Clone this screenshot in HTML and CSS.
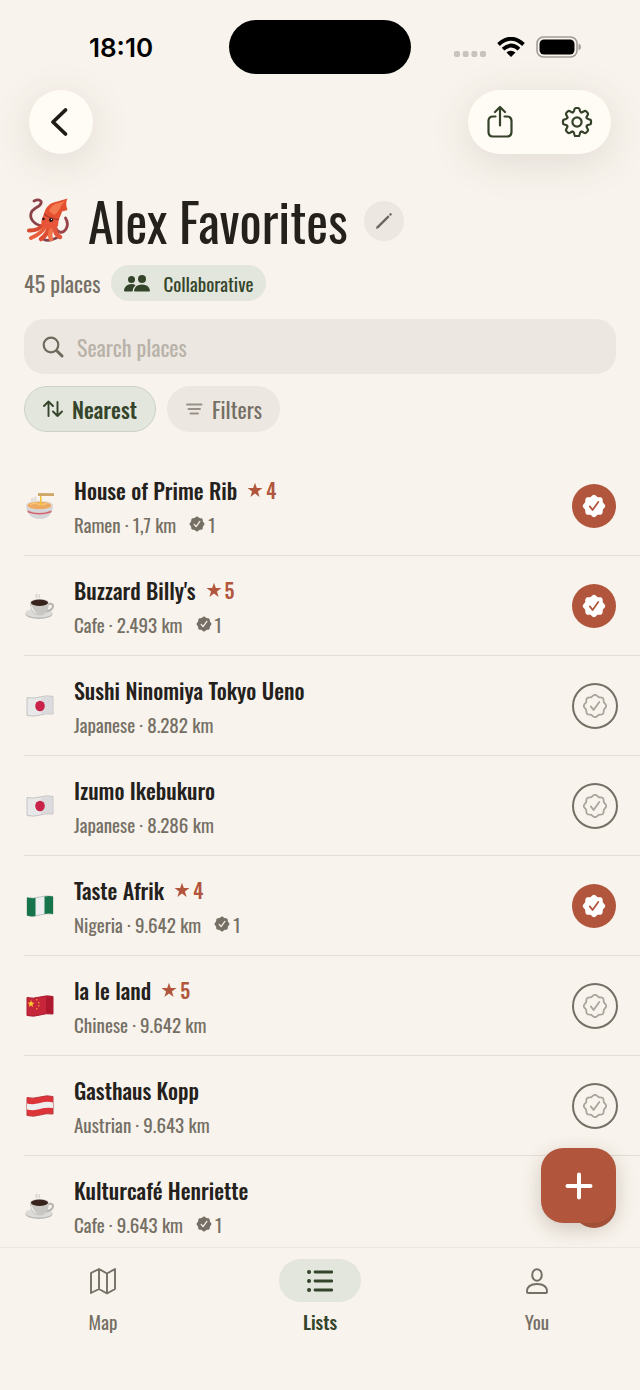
FILE: index.html
```html
<!DOCTYPE html>
<html lang="en">
<head>
    <meta charset="UTF-8">
    <meta name="viewport" content="width=device-width, initial-scale=1.0">
    <title>Alex Favorites</title>
    <link rel="stylesheet" href="styles.css">
</head>
<body>
    <!-- Shared icons -->
    <svg class="sprite" aria-hidden="true">
        <symbol id="seal" viewBox="8 8 240 240">
            <path d="M225.86,102.82c-3.77-3.94-7.67-8-9.14-11.57-1.36-3.27-1.44-8.69-1.52-13.94-.15-9.76-.31-20.82-8-28.51s-18.75-7.85-28.51-8c-5.25-.08-10.67-.16-13.94-1.52-3.56-1.47-7.63-5.37-11.57-9.14C146.28,23.51,138.44,16,128,16s-18.27,7.51-25.18,14.14c-3.94,3.77-8,7.67-11.57,9.14C88,40.64,82.56,40.72,77.31,40.8c-9.76.15-20.82.31-28.51,8S41,67.55,40.8,77.31c-.08,5.25-.16,10.67-1.52,13.94-1.47,3.56-5.37,7.63-9.14,11.57C23.51,109.72,16,117.56,16,128s7.51,18.27,14.14,25.18c3.77,3.94,7.67,8,9.14,11.57,1.36,3.27,1.44,8.69,1.52,13.94.15,9.76.31,20.82,8,28.51s18.75,7.85,28.51,8c5.25.08,10.67.16,13.94,1.52,3.56,1.47,7.63,5.37,11.57,9.14C109.72,232.49,117.56,240,128,240s18.27-7.51,25.18-14.14c3.94-3.77,8-7.67,11.57-9.14,3.27-1.36,8.69-1.44,13.94-1.52,9.76-.15,20.82-.31,28.51-8s7.85-18.75,8-28.51c.08-5.25.16-10.67,1.52-13.94,1.47-3.56,5.37-7.63,9.14-11.57C232.49,146.28,240,138.44,240,128S232.49,109.73,225.86,102.82Z"/>
            <path class="tick" d="M86 132 L114 168 L171 88"/>
        </symbol>
        <symbol id="star" viewBox="0 0 24 24">
            <path d="M12 1 L14.7 9 H23.2 L16.4 14.1 L18.9 22.4 L12 17.4 L5.1 22.4 L7.6 14.1 L.8 9 H9.3 Z"/>
        </symbol>
        <symbol id="coffee" viewBox="0 0 30 28">
            <ellipse cx="14" cy="22" rx="13.5" ry="5" fill="#b9b7b3"/>
            <ellipse cx="14" cy="21" rx="13.5" ry="4.5" fill="#dddbd7"/>
            <path d="M22 12.500q6-2 6 1.500q0 4-7 5.500" fill="none" stroke="#b5b2ae" stroke-width="2"/>
            <path d="M5 10.500c0 7 3 13 9.500 13s9.500-6 9.500-13z" fill="#c9c7c3"/>
            <path d="M7 14q2 7 7 8-7-1-8-8z" fill="#f6f5f3"/>
            <ellipse cx="14.500" cy="10.500" rx="9.500" ry="3.800" fill="#e0ddd8"/>
            <ellipse cx="14.500" cy="10.800" rx="8.600" ry="3.200" fill="#38241c"/>
            <path d="M12.500 6q-3-2 0-4M15 5.500q-2-1.500 0-3" fill="none" stroke="#d5d3cf" stroke-width="1.500"/>
        </symbol>
        <symbol id="ramen" viewBox="0 0 30 28">
            <path d="M8 10q-2-2 0-4M11 9q-2-2 0-4" fill="none" stroke="#e0dcd6" stroke-width="2"/>
            <path d="M1 12c0 9 5 15 14 15s13-6 13-15z" fill="#d4d5d8"/>
            <ellipse cx="14.500" cy="13" rx="13.500" ry="4.500" fill="#e2e0de"/>
            <ellipse cx="14.500" cy="13.500" rx="12" ry="3.800" fill="#eda862"/>
            <path d="M5 13q4-3 8-1 4 2 9-1" fill="none" stroke="#f8c66f" stroke-width="1.500"/>
            <path d="M2.300 18.500q12.300 5 24.400 0l-.6 2q-11.500 4-23.100 0z" fill="#d4606a"/>
            <path d="M13 2h3.500v11h-1.500V4h-2z" fill="#f2c332"/>
            <path d="M13 1l16 .3v2.700H13z" fill="#cda769"/>
        </symbol>
        <symbol id="flag-jp" viewBox="0 0 28 22">
            <path d="M1 2.500Q7 4 14 2T27 1.500V19Q20 18 14 20T1 20.500z" fill="#e9e8e9" stroke="#c5c3c4"/>
            <path d="M15 3Q21 1 26 2V18Q21 17.500 15 19z" fill="#dbdadc"/>
            <ellipse cx="14" cy="11" rx="4.800" ry="5.200" fill="#c92349"/>
        </symbol>
        <symbol id="flag-ng" viewBox="0 0 28 22">
            <path d="M1 2.500Q7 4 14 2T27 1.500V19Q20 18 14 20T1 20.500z" fill="#eeeeee" stroke="#b7c5bb"/>
            <path d="M1 2.500q5 1 8.500.5v18q-4 1-8.500-.5zM18.500 1.500q5-1 8.500 0V19q-4-1-8.500 0z" fill="#16734a"/>
        </symbol>
        <symbol id="flag-cn" viewBox="0 0 28 22">
            <path d="M1 2.500Q7 4 14 2T27 1.500V19Q20 18 14 20T1 20.500z" fill="#c6253a" stroke="#a81d31"/>
            <path d="M20 2q4-1 7-.5V19q-4-1-7-.5z" fill="#ae1930"/>
            <path d="M5 5l1 2.500 2.500.2-2 1.800.6 2.500L5 10.600l-2.100 1.400.6-2.500-2-1.800 2.500-.2z" fill="#f6c72f"/>
            <path d="M10 4h1.500v1.500H10zM12 7h1.500v1.500H12zM12 10h1.500v1.500H12zM10 13h1.500v1.500H10z" fill="#e38b32"/>
        </symbol>
        <symbol id="flag-at" viewBox="0 0 28 22">
            <path d="M1 2.500Q7 4 14 2T27 1.500V19Q20 18 14 20T1 20.500z" fill="#dc3438" stroke="#bc3b3e"/>
            <path d="M1 8.500Q7 10 14 8T27 7.500V13Q20 12 14 14T1 14.500z" fill="#eeeeee"/>
        </symbol>
    </svg>

    <div class="app">
        <div class="status-bar">
            <span class="time">18:10</span>
            <span class="island"></span>
            <span class="status-icons">
                <svg width="32" height="6" viewBox="0 0 32 6" fill="#c7c3be">
                    <rect width="6" height="6" rx="2"/><rect x="8.700" width="6" height="6" rx="2"/><rect x="17.400" width="6" height="6" rx="2"/><rect x="26" width="6" height="6" rx="2"/>
                </svg>
                <svg class="wifi" width="28" height="20" viewBox="0 0 28 20" fill="none" stroke="#000" stroke-width="3.800">
                    <path d="M1.500 7.500Q14-4 26.500 7.500M6 12.200Q14 5 22 12.200"/>
                    <path d="M14 20L9.500 15.500Q14 11.800 18.500 15.500Z" fill="#000" stroke="none"/>
                </svg>
                <svg width="45" height="22" viewBox="0 0 45 22">
                    <rect x="1" y="1" width="40" height="20" rx="6.500" fill="none" stroke="#a09d99" stroke-width="1.600"/>
                    <rect x="3.500" y="3.500" width="35" height="15" rx="4.500"/>
                    <path d="M42.500 7.500q2.500.8 2.500 3.500t-2.500 3.500z" fill="#a09d99"/>
                </svg>
            </span>
        </div>

        <header class="top-bar">
            <button type="button" class="back-btn" aria-label="Back">
                <svg width="24" height="30" viewBox="0 0 24 30" fill="none" stroke="#1f1b16" stroke-width="3.800" stroke-linecap="round" stroke-linejoin="round"><path d="M16.500 3L4 15l12.500 12"/></svg>
            </button>
            <div class="top-actions">
                <button type="button" aria-label="Share">
                    <svg width="28" height="34" viewBox="0 0 28 34" fill="none" stroke="#344229" stroke-width="2.200" stroke-linecap="round" stroke-linejoin="round"><path d="M9.500 11.500H7Q2.500 11.500 2.500 16V27Q2.500 31.500 7 31.500H21Q25.500 31.500 25.500 27V16Q25.500 11.500 21 11.500H18.500M14 20.500V2M9 7l5-5 5 5"/></svg>
                </button>
                <button type="button" aria-label="Settings">
                    <svg width="32" height="32" viewBox="-16 -16 32 32" fill="none" stroke="#344229" stroke-width="2.200" stroke-linecap="round">
                        <defs><path id="tooth" d="M-4-9.700Q-3-10-2.700-12.200Q-2.400-14-1.200-14H1.200Q2.400-14 2.700-12.200Q3-10 4-9.700"/></defs>
                        <use href="#tooth"/><use href="#tooth" transform="rotate(45)"/><use href="#tooth" transform="rotate(90)"/><use href="#tooth" transform="rotate(135)"/><use href="#tooth" transform="rotate(180)"/><use href="#tooth" transform="rotate(225)"/><use href="#tooth" transform="rotate(270)"/><use href="#tooth" transform="rotate(315)"/>
                        <circle r="4.600"/>
                    </svg>
                </button>
            </div>
        </header>

        <main class="content">
            <div class="title-row">
                <svg class="squid" width="48" height="46" viewBox="0 0 48 46" aria-hidden="true">
                    <g fill="none" stroke-linecap="round">
                        <path d="M19 29C10 28 4 21 8 14Q11 11 15 9Q19 5 16 3.500Q14 2 10 4" stroke="#8b4148" stroke-width="2.800"/>
                        <path d="M31 28C32 35 38 38 42 32Q45 27 41.500 21" stroke="#99434a" stroke-width="2.800"/>
                        <path d="M20 42.500Q25 45 34 40" stroke="#82424b" stroke-width="2.600"/>
                        <path d="M20 27Q14 34 5 33.500" stroke="#d84a2f" stroke-width="4"/>
                        <path d="M22 29Q17 37 7 41" stroke="#ea5e3c" stroke-width="4"/>
                        <path d="M25 30Q24 37 17 42" stroke="#dd4d31" stroke-width="4.500"/>
                        <path d="M28 30Q25 38 27 42" stroke="#f0714a" stroke-width="4.500"/>
                        <path d="M31 29Q30 37 36 40" stroke="#e2553a" stroke-width="4.500"/>
                    </g>
                    <path d="M20.500 16Q15 26 19 30Q27 34 34 29L35 20Z" fill="#e95538"/>
                    <path d="M20 16.500Q22 9 28 6Q35 4 43.500 1.500Q41 6 43.500 13L38 14.500Q37 18 35 22Q27 22 20 16.500Z" fill="#e4502f"/>
                    <path d="M25 14Q27 8 33 6.500L41 4Q37 8 35 13Q33 17 30 18Z" fill="#f37a50"/>
                    <path d="M20 17Q27 22.500 35 22.500" fill="none" stroke="#ab3830" stroke-width="1.500"/>
                    <circle cx="27" cy="23" r="2.100" fill="#2a1716"/><circle cx="19.500" cy="22" r="1.300" fill="#2a1716"/>
                    <circle cx="27.500" cy="22.300" r=".6" fill="#fff"/>
                </svg>
                <h1>Alex Favorites</h1>
                <button type="button" class="edit-btn" aria-label="Edit name">
                    <svg width="18" height="18" viewBox="0 0 18 18" fill="#6d675e"><path d="M1 17l.6-2.400L13 3.300l1.600 1.600L3.400 16.200z"/><path d="M13.900 2.400l1-1q.9-.7 1.600 0t0 1.600l-1 1z"/></svg>
                </button>
            </div>

            <div class="meta-row">
                <span>45 places</span>
                <span class="tag">
                    <svg width="26" height="17" viewBox="0 0 26 17" fill="#34452b"><circle cx="7.500" cy="4.500" r="3.500"/><circle cx="18" cy="4" r="4"/><path d="M0 15.500Q1 9 7.500 9q2.500 0 4 1.200Q9 12 8.500 16.500H1Q0 16.500 0 15.500zM10 15.500Q11 9.500 18 9.500T26 15.500Q26 16.500 25 16.500H11Q10 16.500 10 15.500z"/></svg>
                    Collaborative
                </span>
            </div>

            <label class="search">
                <svg width="22" height="22" viewBox="0 0 22 22" fill="none" stroke="#70695e" stroke-width="2.200" stroke-linecap="round"><circle cx="9" cy="9" r="7.300"/><path d="M15 15l5 5" stroke-width="3"/></svg>
                <input type="text" placeholder="Search places" aria-label="Search places">
            </label>

            <div class="chips">
                <button type="button" class="chip active">
                    <svg width="20" height="18" viewBox="0 0 20 18" fill="none" stroke="#34452b" stroke-width="1.900" stroke-linecap="round" stroke-linejoin="round"><path d="M5.500 16V1.500M1 6l4.500-4.500L10 6M14.500 2v14M10 11.500l4.500 4.500 4.500-4.500"/></svg>
                    Nearest
                </button>
                <button type="button" class="chip">
                    <svg width="18" height="12" viewBox="0 0 18 12" fill="none" stroke="#989187" stroke-width="1.900" stroke-linecap="round"><path d="M2 1.500h14.500M3.500 6h11.500M5.500 10.500h7.500"/></svg>
                    Filters
                </button>
            </div>

            <ul class="places">
                <li class="place">
                    <svg class="emoji tall"><use href="#ramen"/></svg>
                    <div class="info">
                        <h2>House of Prime Rib <span class="rating"><svg><use href="#star"/></svg>4</span></h2>
                        <p>Ramen · 1,7 km <span class="visits"><svg><use href="#seal"/></svg>1</span></p>
                    </div>
                    <button type="button" class="check done" aria-label="Visited"><svg><use href="#seal"/></svg></button>
                </li>
                <li class="place">
                    <svg class="emoji tall"><use href="#coffee"/></svg>
                    <div class="info">
                        <h2>Buzzard Billy's <span class="rating"><svg><use href="#star"/></svg>5</span></h2>
                        <p>Cafe · 2.493 km <span class="visits"><svg><use href="#seal"/></svg>1</span></p>
                    </div>
                    <button type="button" class="check done" aria-label="Visited"><svg><use href="#seal"/></svg></button>
                </li>
                <li class="place">
                    <svg class="emoji"><use href="#flag-jp"/></svg>
                    <div class="info">
                        <h2>Sushi Ninomiya Tokyo Ueno</h2>
                        <p>Japanese · 8.282 km</p>
                    </div>
                    <button type="button" class="check" aria-label="Mark as visited"><svg><use href="#seal"/></svg></button>
                </li>
                <li class="place">
                    <svg class="emoji"><use href="#flag-jp"/></svg>
                    <div class="info">
                        <h2>Izumo Ikebukuro</h2>
                        <p>Japanese · 8.286 km</p>
                    </div>
                    <button type="button" class="check" aria-label="Mark as visited"><svg><use href="#seal"/></svg></button>
                </li>
                <li class="place">
                    <svg class="emoji"><use href="#flag-ng"/></svg>
                    <div class="info">
                        <h2>Taste Afrik <span class="rating"><svg><use href="#star"/></svg>4</span></h2>
                        <p>Nigeria · 9.642 km <span class="visits"><svg><use href="#seal"/></svg>1</span></p>
                    </div>
                    <button type="button" class="check done" aria-label="Visited"><svg><use href="#seal"/></svg></button>
                </li>
                <li class="place">
                    <svg class="emoji"><use href="#flag-cn"/></svg>
                    <div class="info">
                        <h2>la le land <span class="rating"><svg><use href="#star"/></svg>5</span></h2>
                        <p>Chinese · 9.642 km</p>
                    </div>
                    <button type="button" class="check" aria-label="Mark as visited"><svg><use href="#seal"/></svg></button>
                </li>
                <li class="place">
                    <svg class="emoji"><use href="#flag-at"/></svg>
                    <div class="info">
                        <h2>Gasthaus Kopp</h2>
                        <p>Austrian · 9.643 km</p>
                    </div>
                    <button type="button" class="check" aria-label="Mark as visited"><svg><use href="#seal"/></svg></button>
                </li>
                <li class="place">
                    <svg class="emoji tall"><use href="#coffee"/></svg>
                    <div class="info">
                        <h2>Kulturcafé Henriette</h2>
                        <p>Cafe · 9.643 km <span class="visits"><svg><use href="#seal"/></svg>1</span></p>
                    </div>
                    <button type="button" class="check done" aria-label="Visited"><svg><use href="#seal"/></svg></button>
                </li>
            </ul>
        </main>

        <nav class="tab-bar">
            <button type="button" class="add-btn" aria-label="Add place">
                <svg width="28" height="28" viewBox="0 0 28 28" stroke="#fff" stroke-width="4" stroke-linecap="round"><path d="M14 2.500v23M2.500 14h23"/></svg>
            </button>
            <a href="#map" class="tab">
                <span class="tab-icon"><svg width="28" height="28" viewBox="0 0 28 28" fill="none" stroke="#756f65" stroke-width="1.900" stroke-linejoin="round"><path d="M2 6L10 2l8 4.500 8-4.500v20l-8 4.500-8-4.500-8 4zM10 2v20M18 6.500v20"/></svg></span>
                Map
            </a>
            <a href="#lists" class="tab active">
                <span class="tab-icon"><svg width="26" height="24" viewBox="0 0 26 24" fill="none" stroke="#34452b" stroke-width="2.800" stroke-linecap="round"><path d="M8 3h17M8 12h17M8 21h17"/><path d="M2 3h.1M2 12h.1M2 21h.1" stroke-width="4"/></svg></span>
                Lists
            </a>
            <a href="#you" class="tab">
                <span class="tab-icon"><svg width="24" height="28" viewBox="0 0 24 28" fill="none" stroke="#756f65" stroke-width="2" stroke-linejoin="round"><ellipse cx="12" cy="8" rx="4.800" ry="5.700"/><path d="M2 24.500q0-7.500 10-7.500t10 7.500q0 1.500-1.500 1.500h-17Q2 26 2 24.500z"/></svg></span>
                You
            </a>
        </nav>
    </div>
</body>
</html>
```
FILE: styles.css
```css
* {
    margin: 0;
    padding: 0;
    box-sizing: border-box;
}

body {
    font-family: Oswald, "Liberation Sans Narrow", "Liberation Sans", sans-serif;
    background: #f8f3ec;
    color: #24211d;
}

button {
    display: flex;
    align-items: center;
    justify-content: center;
    border: none;
    background: none;
    font: inherit;
    cursor: pointer;
}

.sprite {
    position: absolute;
    width: 0;
    height: 0;
}

.app {
    display: flex;
    flex-direction: column;
    height: 100vh;
}

/* Status bar */
.status-bar {
    display: grid;
    grid-template-columns: 1fr auto 1fr;
    align-items: center;
    padding: 20px 24px 16px;
}

.time {
    padding: 2px 11px 0 0;
    text-align: center;
    font-family: Inter, sans-serif;
    font-size: 26px;
    font-weight: 600;
    line-height: 32px;
    color: #000;
}

.island {
    width: 182px;
    height: 54px;
    border-radius: 27px;
    background: #000;
}

.status-icons {
    display: flex;
    align-items: center;
    justify-content: flex-end;
    gap: 11px;
    padding-right: 35px;
}

.status-icons svg:first-child {
    margin-top: 14px;
}

/* Top buttons */
.top-bar {
    display: flex;
    justify-content: space-between;
    padding: 0 29px;
}

.back-btn {
    width: 64px;
    height: 64px;
    border-radius: 50%;
    background: #fffbf5;
    box-shadow: 0 8px 40px rgba(70, 60, 45, 0.13);
}

.top-actions {
    display: flex;
    gap: 13px;
    padding-right: 2px;
    border-radius: 32px;
    background: #fffbf5;
    box-shadow: 0 8px 40px rgba(70, 60, 45, 0.13);
}

.top-actions button {
    width: 64px;
    height: 64px;
}

/* List header */
.content {
    flex: 1;
    min-height: 0;
    padding: 41px 0 0 24px;
    overflow-y: auto;
    scrollbar-width: none;
}

.title-row {
    display: flex;
    align-items: center;
    gap: 16px;
    height: 52px;
}

.squid {
    margin-top: -2px;
}

h1 {
    font-size: 52px;
    font-weight: 400;
    line-height: 52px;
}

.edit-btn {
    width: 40px;
    height: 40px;
    border-radius: 50%;
    background: #ece7e0;
}

.meta-row {
    display: flex;
    align-items: center;
    gap: 11px;
    margin-top: 18px;
    font-size: 22px;
    color: #756f65;
}

.tag {
    display: flex;
    align-items: center;
    gap: 13px;
    height: 36px;
    padding: 0 12px 0 13px;
    border-radius: 18px;
    background: #e3e6dc;
    font-size: 19px;
    color: #34452b;
}

.search {
    display: flex;
    align-items: center;
    gap: 13px;
    height: 55px;
    margin: 18px 24px 0 0;
    padding: 0 18px;
    border-radius: 20px;
    background: #ece7e0;
}

.search input {
    flex: 1;
    min-width: 0;
    border: none;
    outline: none;
    background: none;
    font: inherit;
    font-size: 22px;
    color: #24211d;
}

.search input::placeholder {
    color: #b8b2a9;
}

.chips {
    display: flex;
    gap: 11px;
    margin-top: 12px;
}

.chip {
    gap: 9px;
    height: 46px;
    padding: 0 18px;
    border-radius: 23px;
    background: #ece7e0;
    font-size: 22px;
    color: #756f65;
}

.chip.active {
    border: 1px solid #cbd2c4;
    background: #e3e6dc;
    font-weight: 500;
    color: #34452b;
}

/* Places */
.places {
    margin-top: 24px;
    list-style: none;
}

.place {
    display: flex;
    align-items: center;
    height: 100px;
    padding-right: 24px;
    border-bottom: 1px solid #e2ded7;
}

.emoji {
    width: 32px;
    height: 22px;
    margin-right: 18px;
}

.emoji.tall {
    height: 28px;
}

.info {
    flex: 1;
    padding-top: 2px;
}

.info h2,
.info p {
    display: flex;
    align-items: center;
}

.info h2 {
    gap: 10px;
    font-size: 22px;
    font-weight: 500;
    line-height: 34px;
}

.info p {
    gap: 13px;
    font-size: 19px;
    line-height: 34px;
    color: #756f65;
}

.rating,
.visits {
    display: flex;
    align-items: center;
    gap: 3px;
}

.rating {
    font-size: 20px;
    color: #b1563c;
}

.rating svg,
.visits svg {
    width: 16px;
    height: 16px;
    fill: currentColor;
}

.tick {
    fill: none;
    stroke: var(--tick, #f8f3ec);
    stroke-width: 18px;
    stroke-linecap: round;
    stroke-linejoin: round;
}

.check {
    --tick: #aaa49b;
    width: 46px;
    height: 46px;
    margin-right: -2px;
    border: 2px solid #756f65;
    border-radius: 50%;
}

.check svg {
    width: 24px;
    height: 24px;
    fill: none;
    stroke: #aaa49b;
    stroke-width: 18px;
}

.check.done {
    --tick: #b1563c;
    width: 44px;
    height: 44px;
    margin-right: 0;
    border: none;
    background: #b1563c;
}

.check.done svg {
    fill: #fff;
    stroke: none;
}

/* Bottom tabs */
.tab-bar {
    position: relative;
    display: flex;
    justify-content: space-between;
    height: 143px;
    padding: 11px 62px 0;
    border-top: 1px solid #ebe6df;
}

.tab {
    display: flex;
    flex-direction: column;
    align-items: center;
    gap: 3px;
    font-size: 19px;
    line-height: 32px;
    color: #756f65;
    text-decoration: none;
}

.tab-icon {
    display: flex;
    align-items: center;
    justify-content: center;
    width: 82px;
    height: 43px;
    border-radius: 22px;
}

.tab.active {
    font-weight: 500;
    color: #34452b;
}

.tab.active .tab-icon {
    background: #e3e6dc;
}

.add-btn {
    position: absolute;
    right: 24px;
    bottom: 167px;
    width: 75px;
    height: 75px;
    border-radius: 22px;
    background: #b1563c;
    box-shadow: 0 6px 20px rgba(60, 45, 30, 0.22);
}
```
